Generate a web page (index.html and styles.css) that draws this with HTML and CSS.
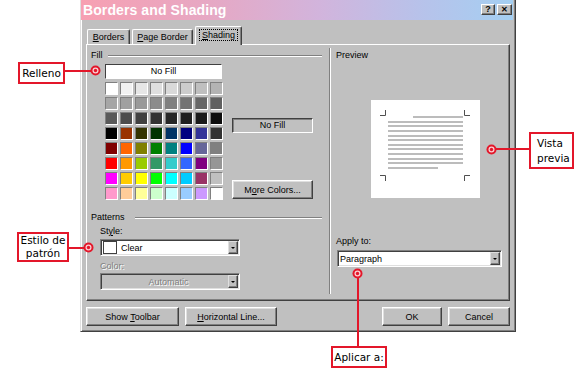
FILE: index.html
```html
<!DOCTYPE html>
<html lang="en">
<head>
	<meta charset="utf-8">
	<title>Borders and Shading</title>
	<link rel="stylesheet" href="styles.css">
</head>
<body>

<div class="stage">

<div class="dialog">
    <div class="titlebar">
        <span class="title">Borders and Shading</span>
        <div class="caption">
            <span class="cbtn help">?</span>
            <span class="cbtn close">&#x2715;</span>
        </div>
    </div>

    <div class="body">
        <div class="tabs">
            <div class="tab tab-borders"><u>B</u>orders</div>
            <div class="tab tab-page"><u>P</u>age Border</div>
            <div class="tab tab-shading active"><span class="focus"><u>S</u>hading</span></div>
        </div>

        <div class="panel">
            <div class="left">
                <div class="legend"><span>Fill</span></div>
                <div class="fill">
                    <div class="swatches">
                        <div class="nofill">No Fill</div>
                        <div class="palette"></div>
                    </div>
                    <div class="fill-side">
                        <div class="current">No Fill</div>
                        <div class="btn more"><span>M<u>o</u>re Colors...</span></div>
                    </div>
                </div>

                <div class="legend patterns"><span>Patterns</span></div>
                <div class="fields">
                    <div class="label style-label">St<u>y</u>le:</div>
                    <div class="combo">
                        <span class="chip"></span>
                        <span class="combo-text">Clear</span>
                        <span class="drop"></span>
                    </div>
                    <div class="label color-label disabled">Color:</div>
                    <div class="combo combo-disabled">
                        <span class="combo-text centered">Automatic</span>
                        <span class="drop"></span>
                    </div>
                </div>
            </div>

            <div class="sep"></div>

            <div class="right">
                <div class="label preview-label">Preview</div>
                <div class="page">
                    <svg width="109" height="98" viewBox="0 0 109 98">
                        <g fill="#bcbcbc">
                            <rect x="42" y="16" width="50" height="2"/>
                            <rect x="17" y="21" width="75" height="2"/>
                            <rect x="17" y="25" width="75" height="2"/>
                            <rect x="17" y="30" width="75" height="2"/>
                            <rect x="17" y="35" width="75" height="2"/>
                            <rect x="17" y="39" width="75" height="2"/>
                            <rect x="17" y="44" width="75" height="2"/>
                            <rect x="17" y="48" width="75" height="2"/>
                            <rect x="17" y="53" width="75" height="2"/>
                            <rect x="17" y="58" width="75" height="2"/>
                            <rect x="17" y="62" width="75" height="2"/>
                            <rect x="17" y="67" width="50" height="2"/>
                        </g>
                        <g fill="none" stroke="#505050" stroke-width="1">
                            <path d="M9 15.5 H14.5 V10"/>
                            <path d="M99 15.5 H93.5 V10"/>
                            <path d="M9 75.5 H14.5 V81"/>
                            <path d="M99 75.5 H93.5 V81"/>
                        </g>
                    </svg>
                </div>
                <div class="label apply-label">Apply to:</div>
                <div class="combo combo-apply">
                    <span class="combo-text">Paragraph</span>
                    <span class="drop"></span>
                </div>
            </div>
        </div>

        <div class="footer">
            <div class="btn btn-toolbar"><span>Show <u>T</u>oolbar</span></div>
            <div class="btn btn-hline"><span><u>H</u>orizontal Line...</span></div>
            <div class="spacer"></div>
            <div class="btn btn-ok"><span>OK</span></div>
            <div class="btn btn-cancel"><span>Cancel</span></div>
        </div>
    </div>
</div>

<!-- callouts -->
<div class="callout co-relleno">Relleno</div>
<div class="leader lead-relleno"></div>
<span class="dot dot-relleno"></span>

<div class="callout co-estilo"><span>Estilo de<br>patrón</span></div>
<div class="leader lead-estilo"></div>
<span class="dot dot-estilo"></span>

<div class="callout co-vista"><span>Vista<br>previa</span></div>
<div class="leader lead-vista"></div>
<span class="dot dot-vista"></span>

<div class="callout co-aplicar">Aplicar a:</div>
<div class="leader lead-aplicar"></div>
<span class="dot dot-aplicar"></span>

</div>

<script>
// Word shading palette, row by row
var colors = [
    "#ffffff","#f2f2f2","#e6e6e6","#dfdfdf","#d9d9d9","#cccccc","#bfbfbf","#b3b3b3",
    "#a6a6a6","#a0a0a0","#999999","#8c8c8c","#808080","#737373","#666666","#606060",
    "#595959","#4d4d4d","#404040","#333333","#262626","#202020","#1a1a1a","#0d0d0d",
    "#000000","#993300","#333300","#003300","#003366","#000080","#333399","#333333",
    "#800000","#ff6600","#808000","#008000","#008080","#0000ff","#666699","#808080",
    "#ff0000","#ff9900","#99cc00","#339966","#33cccc","#3366ff","#800080","#969696",
    "#ff00ff","#ffcc00","#ffff00","#00ff00","#00ffff","#00ccff","#993366","#c0c0c0",
    "#ff99cc","#ffcc99","#ffff99","#ccffcc","#ccffff","#99ccff","#cc99ff","#ffffff"
];
var elpalette = document.querySelector(".palette");
colors.forEach(function(c){
    var cell = document.createElement("span");
    cell.className = "cell";
    cell.style.background = c;
    elpalette.appendChild(cell);
});

// Callout dots
document.querySelectorAll(".dot").forEach(function(eldot){
    eldot.innerHTML = '<svg width="11" height="11" viewBox="0 0 11 11">' +
        '<circle cx="5.5" cy="5.5" r="5" fill="#e3172a"/>' +
        '<circle cx="5.5" cy="5.5" r="3" fill="#fbd0d4"/>' +
        '<circle cx="5.5" cy="5.5" r="1.7" fill="#e3172a"/></svg>';
});
</script>

</body>
</html>
```

FILE: styles.css
```css
body {
    margin: 0;
    background: #fff;
    font-family: "Liberation Sans", Arial, sans-serif;
    font-size: 9px;
    color: #000;
}
u { text-decoration: underline; }

.stage {
    position: relative;
    width: 576px;
    height: 371px;
    overflow: hidden;
}

/* ---- dialog window ---- */
.dialog {
    margin-left: 80px;
    width: 436px;
    height: 332px;
    box-sizing: border-box;
    background: #c0c0c0;
    border-left: 1px solid #dfdfdf;
    border-right: 1px solid #404040;
    border-bottom: 1px solid #404040;
    box-shadow: inset 1px 0 #fff, inset -1px -1px #808080;
    padding: 0 2px 2px 0;
    display: flex;
    flex-direction: column;
}
.titlebar {
    height: 20px;
    display: flex;
    align-items: center;
    padding: 0 1px 0 2px;
    background: linear-gradient(to right, #f7a0b2 0%, #e6a8c4 30%, #d2b4dc 55%, #b8c2ea 78%, #a4cff2 100%);
}
.title {
    flex: 1;
    color: #fff;
    font-weight: bold;
    font-size: 14px;
    letter-spacing: 0.1px;
}
.caption {
    display: flex;
    gap: 2px;
    margin-top: -1px;
}
.cbtn {
    width: 14px;
    height: 11px;
    box-sizing: border-box;
    background: #c0c0c0;
    border: 1px solid;
    border-color: #fff #404040 #404040 #fff;
    box-shadow: inset -1px -1px #808080;
    font-weight: bold;
    font-size: 9px;
    line-height: 9px;
    text-align: center;
}
.cbtn.close { width: 15px; font-size: 8px; }

.body {
    padding: 6px 2px 0 5px;
}

/* ---- tabs ---- */
.tabs {
    display: flex;
    align-items: flex-end;
    height: 18px;
    padding-left: 1px;
}
.tab {
    height: 15px;
    box-sizing: border-box;
    border: 1px solid;
    border-bottom: none;
    border-color: #fff #404040 #404040 #fff;
    box-shadow: inset -1px 0 #808080;
    border-radius: 2px 2px 0 0;
    text-align: center;
    line-height: 14px;
}
.tab-borders { width: 43px; margin-right: 2px; }
.tab-page { width: 61px; margin-right: 2px; }
.tab-shading { width: 47px; }
.tab.active {
    height: 19px;
    margin-bottom: -1px;
    position: relative;
    z-index: 1;
    background: #c0c0c0;
    line-height: 16px;
}
.focus {
    outline: 1px dotted #000;
    padding: 0 2px;
}

/* ---- panel ---- */
.panel {
    width: 424px;
    height: 257px;
    box-sizing: border-box;
    border: 1px solid;
    border-color: #fff #404040 #404040 #fff;
    box-shadow: inset -1px -1px #808080;
    display: flex;
}
.left {
    width: 242px;
    box-sizing: border-box;
    padding: 5px 7px 0 4px;
}
.sep {
    width: 0;
    border-left: 1px solid #808080;
    border-right: 1px solid #fff;
    margin: 3px 0 6px;
}
.right {
    flex: 1;
    padding: 5px 0 0 5px;
}

.legend {
    display: flex;
    align-items: center;
    height: 11px;
    line-height: 11px;
}
.legend::after {
    content: "";
    flex: 1;
    margin-left: 5px;
    border-top: 1px solid #808080;
    border-bottom: 1px solid #fff;
}
.legend.patterns { margin-top: 12px; }
.legend.patterns::after { margin-left: 10px; }

.label {
    height: 11px;
    line-height: 11px;
}
.disabled {
    color: #808080;
    text-shadow: 1px 1px #fff;
}

/* ---- fill ---- */
.fill {
    display: flex;
    margin-left: 14px;
}
.nofill {
    margin-top: 3px;
    width: 117px;
    height: 15px;
    box-sizing: border-box;
    background: #fff;
    border: 1px solid;
    border-color: #404040 #fff #fff #404040;
    text-align: center;
    line-height: 13px;
}
.palette {
    margin-top: 3px;
    display: grid;
    grid-template-columns: repeat(8, 13px);
    grid-auto-rows: 13px;
    gap: 2px;
}
.cell {
    box-sizing: border-box;
    border: 1px solid;
    border-color: #808080 #fff #fff #808080;
}
.fill-side {
    margin-left: 9px;
    display: flex;
    flex-direction: column;
}
.current {
    margin-top: 57px;
    width: 81px;
    height: 15px;
    box-sizing: border-box;
    border: 1px solid;
    border-color: #404040 #fff #fff #404040;
    box-shadow: inset 1px 1px #808080;
    text-align: center;
    line-height: 13px;
}
.more {
    margin-top: 47px;
    width: 81px;
    height: 19px;
}

/* ---- patterns ---- */
.fields { margin-left: 9px; }
.style-label { margin-top: 3px; }
.color-label { margin-top: 5px; }
.combo {
    margin-top: 2px;
    width: 140px;
    height: 17px;
    box-sizing: border-box;
    background: #fff;
    border: 1px solid;
    border-color: #808080 #fff #fff #808080;
    box-shadow: inset 1px 1px #404040, inset -1px -1px #dfdfdf;
    display: flex;
    align-items: center;
    padding: 1px 1px 1px 2px;
}
.combo-disabled {
    margin-top: 1px;
    background: #c0c0c0;
    color: #808080;
    text-shadow: 1px 1px #fff;
}
.combo-text { flex: 1; }
.combo-text.centered { text-align: center; padding-left: 6px; }
.chip {
    width: 14px;
    height: 13px;
    box-sizing: border-box;
    background: #fff;
    border: 1px solid #404040;
    margin-right: 4px;
}
.drop {
    align-self: stretch;
    width: 10px;
    box-sizing: border-box;
    background: #c0c0c0;
    border: 1px solid;
    border-color: #dfdfdf #404040 #404040 #dfdfdf;
    box-shadow: inset -1px -1px #808080;
    display: flex;
    align-items: center;
    justify-content: center;
}
.drop::after {
    content: "";
    border-left: 2px solid transparent;
    border-right: 2px solid transparent;
    border-top: 2px solid #000;
}

/* ---- preview ---- */
.page {
    margin: 39px 0 0 35px;
    width: 109px;
    height: 98px;
    background: #fff;
}
.page svg { display: block; }
.apply-label { margin-top: 38px; }
.combo-apply {
    margin: 3px 0 0 1px;
    width: 165px;
}

/* ---- buttons ---- */
.btn {
    box-sizing: border-box;
    background: #c0c0c0;
    border: 1px solid;
    border-color: #fff #404040 #404040 #fff;
    box-shadow: inset -1px -1px #808080, inset 1px 1px #dfdfdf;
    display: flex;
    align-items: center;
    justify-content: center;
}
.footer {
    margin-top: 6px;
    display: flex;
    gap: 6px;
    padding-right: 1px;
}
.footer .btn { height: 19px; }
.btn-toolbar { width: 93px; }
.btn-hline { width: 92px; }
.spacer { flex: 1; }
.btn-ok { width: 60px; }
.btn-cancel { width: 62px; }

/* ---- callouts ---- */
.callout {
    position: absolute;
    box-sizing: border-box;
    background: #fff;
    border: 2px solid #e3172a;
    font-family: "DejaVu Sans", Verdana, sans-serif;
    font-size: 10.5px;
    line-height: 13px;
    text-align: center;
    display: flex;
    align-items: center;
    justify-content: center;
}
.co-relleno { left: 18px; top: 62px; width: 47px; height: 22px; }
.co-estilo { left: 17px; top: 232px; width: 52px; height: 30px; }
.co-vista { left: 529px; top: 132px; width: 45px; height: 37px; justify-content: flex-start; text-align: left; padding-left: 6px; line-height: 15px; }
.co-aplicar { left: 331px; top: 346px; width: 56px; height: 22px; }

.leader {
    position: absolute;
    background: #e3172a;
    height: 2px;
}
.lead-relleno { left: 64px; top: 70px; width: 30px; }
.lead-estilo { left: 68px; top: 247px; width: 18px; }
.lead-vista { left: 495px; top: 148px; width: 35px; }
.lead-aplicar { left: 357px; top: 277px; width: 2px; height: 70px; }

.dot {
    position: absolute;
    width: 11px;
    height: 11px;
}
.dot svg { display: block; }
.dot-relleno { left: 90px; top: 65px; }
.dot-estilo { left: 83px; top: 242px; }
.dot-vista { left: 486px; top: 144px; }
.dot-aplicar { left: 352px; top: 268px; }
```
